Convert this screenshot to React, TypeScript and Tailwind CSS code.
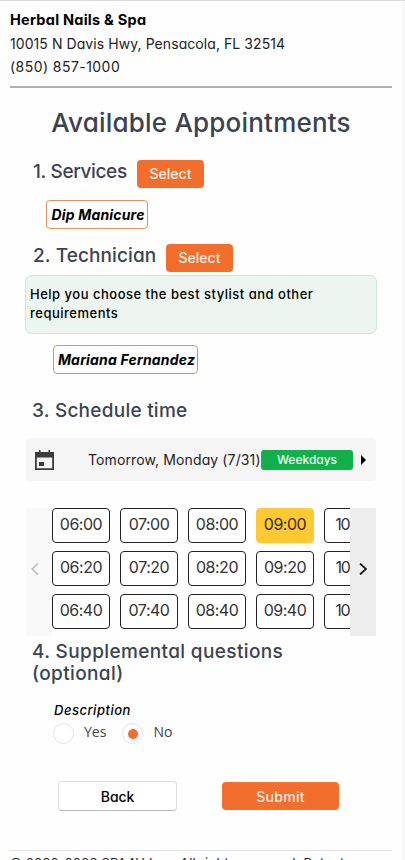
import clsx from "clsx";

const times = [
    ["06:00", "07:00", "08:00", "09:00", "10:00"],
    ["06:20", "07:20", "08:20", "09:20", "10:20"],
    ["06:40", "07:40", "08:40", "09:40", "10:40"],
];

function SelectButton() {
    return (
        <button className="h-7 w-[67px] shrink-0 rounded-[4px] bg-[#f36d2d] text-[14px] leading-7 font-medium text-[#fff3ea]">
            Select
        </button>
    );
}

function Tag({ label, className }: { label: string; className: string }) {
    return (
        <div className={clsx("flex h-[29px] items-center justify-center rounded-[4px] border border-[#dc915f] pl-[2px] text-[14px] font-bold tracking-[0.18px] whitespace-nowrap text-black italic", className)}>
            {label}
        </div>
    );
}

function Radio({ label, checked }: { label: string; checked?: boolean }) {
    return (
        <label className="flex h-[21px] items-center font-['Open_Sans',sans-serif] text-[14px] text-[#444]">
            <span className="mr-[10px] flex h-[21px] w-[21px] items-center justify-center rounded-full border border-[#e4e4e4] bg-white">
                {checked && <span className="h-[10px] w-[10px] rounded-full bg-[#f36d2d]" />}
            </span>
            <span className="pb-[5px]">{label}</span>
        </label>
    );
}

export default function App() {
    return (
        <div className="h-[860px] w-[405px] overflow-hidden border-t border-[#dcdcdc] bg-[#f7f7f7] font-[Inter,sans-serif] [font-feature-settings:'cv11']">
            <div className="h-full w-[402px] bg-[#fefefe] pt-[7px]">
                <header className="mx-[10px] h-[80px] w-[382px] border-b-2 border-[#b0b0b0] text-[14px] leading-[23.5px] text-[#222]">
                    <p className="text-[14.5px] font-bold tracking-[0.25px] text-black">Herbal Nails &amp; Spa</p>
                    <p className="tracking-[0.07px]">10015 N Davis Hwy, Pensacola, FL 32514</p>
                    <p className="tracking-[0.45px]">(850) 857-1000</p>
                </header>

                <h1 className="mt-[17px] h-[37px] text-center text-[26px] leading-9 font-medium tracking-[0.2px] whitespace-nowrap text-[#3c4350]">
                    Available Appointments
                </h1>

                <div className="mt-[18px] ml-[33px] flex h-7 gap-[10px]">
                    <h2 className="w-[94px] text-[19px] leading-6 font-medium tracking-[-0.35px] whitespace-nowrap text-[#3c4350]">1. Services</h2>
                    <SelectButton />
                </div>
                <Tag label="Dip Manicure" className="mt-3 ml-[46px] w-[102px]" />

                <div className="mt-[15px] ml-[33px] flex h-7 gap-[10px]">
                    <h2 className="w-[123px] text-[19px] leading-6 font-medium tracking-[0.1px] whitespace-nowrap text-[#3c4350]">2. Technician</h2>
                    <SelectButton />
                </div>
                <div className="mt-[3px] ml-[25px] h-[59px] w-[352px] rounded-[7px] border border-[#cfe6da] bg-[#ecf5ef] px-1 pt-[9px] text-[13px] leading-[19px] font-medium tracking-[0.5px] text-black">
                    Help you choose the best stylist and other
                    <br />
                    requirements
                </div>
                <Tag label="Mariana Fernandez" className="mt-[11px] ml-[53px] w-[145px]" />

                <h2 className="mt-[25px] ml-[32px] h-6 text-[19px] leading-6 font-medium tracking-[0.25px] text-[#3c4350]">3. Schedule time</h2>
                <div className="mt-[15px] ml-[26px] flex h-[43px] w-[350px] items-center rounded-[4px] bg-[#f5f5f5]">
                    <svg className="ml-[9px] h-5 w-[19px]" viewBox="0 0 19 20">
                        <path fill="#3b3b3b" fillRule="evenodd" d="M0 2h4V0h1.500v2h8V0H15v2h4v18H0zM1.800 7.500v10.700h15.400V7.500zM4 12h5v4H4z" />
                    </svg>
                    <span className="ml-[34px] w-[173px] text-[14px] tracking-[0.12px] whitespace-nowrap text-[#222]">Tomorrow, Monday (7/31)</span>
                    <span className="h-5 w-[92px] rounded-[3px] bg-[#12b04b] text-center text-[12px] leading-5 font-medium text-[#eafff0]">Weekdays</span>
                    <svg className="ml-2 h-[10px] w-[5px]" viewBox="0 0 5 10">
                        <path d="M0 0l5 5-5 5z" />
                    </svg>
                </div>

                <div className="mt-[27px] ml-[26px] flex h-[128px] w-[350px]">
                    <button className="flex w-[26px] items-center justify-center bg-[#f9f9f9] pr-2 pb-[6px]">
                        <svg className="h-3 w-2" viewBox="0 0 8 12" fill="none" stroke="#b9b9b9" strokeWidth="1.500">
                            <path d="M7 0.500L1 6l6 5.500" />
                        </svg>
                    </button>
                    <div className="flex w-[298px] flex-col gap-2 overflow-hidden">
                        {times.map((row) => (
                            <div key={row[0]} className="flex gap-[10px]">
                                {row.map((time) => (
                                    <button
                                        key={time}
                                        className={clsx(
                                            "h-[35px] w-[58px] shrink-0 rounded-[4px] border pb-[3px] text-[16px] leading-none",
                                            time.startsWith("10") ? "tracking-[-1.2px]" : "tracking-[-0.5px]",
                                            time === "09:00" ? "border-[#ffc934] bg-[#ffc934] text-[#3a2a10]" : "border-[#222] bg-white text-[#333]"
                                        )}
                                    >
                                        {time}
                                    </button>
                                ))}
                            </div>
                        ))}
                    </div>
                    <button className="flex w-[26px] items-center justify-center bg-[#eeeeee] pb-[6px]">
                        <svg className="h-3 w-2" viewBox="0 0 8 12" fill="none" stroke="#111" strokeWidth="1.700">
                            <path d="M1 0.500L7 6l-6 5.500" />
                        </svg>
                    </button>
                </div>

                <h2 className="mt-[5px] ml-[32px] text-[19px] leading-[22px] font-medium tracking-[0.37px] whitespace-nowrap text-[#3c4350]">
                    4. Supplemental questions
                    <br />
                    (optional)
                </h2>
                <p className="mt-[15px] ml-[54px] h-5 text-[13px] leading-5 font-medium tracking-[0.5px] text-black italic">Description</p>
                <div className="mt-[3px] ml-[53px] flex gap-4">
                    <Radio label="Yes" />
                    <Radio label="No" checked />
                </div>

                <div className="mt-[37px] ml-[58px] flex gap-[45px] text-[14px] font-medium">
                    <button className="h-[30px] w-[119px] rounded-[4px] border border-[#dedede] border-b-[#b5b5b5] bg-white tracking-[-0.1px] text-black">Back</button>
                    <button className="mt-px h-[28px] w-[117px] rounded-[4px] bg-[#f36d2d] tracking-[0.3px] text-[#fff3ea]">Submit</button>
                </div>

                <footer className="mt-[39px] ml-[10px] w-[382px] border-t border-[#e0e4e8] pt-[2px] text-[13px] leading-5 tracking-[0.2px] whitespace-nowrap text-[#222]">
                    © 2020-2023 SPA4U Inc., All rights reserved. Patent
                </footer>
            </div>
        </div>
    );
}
